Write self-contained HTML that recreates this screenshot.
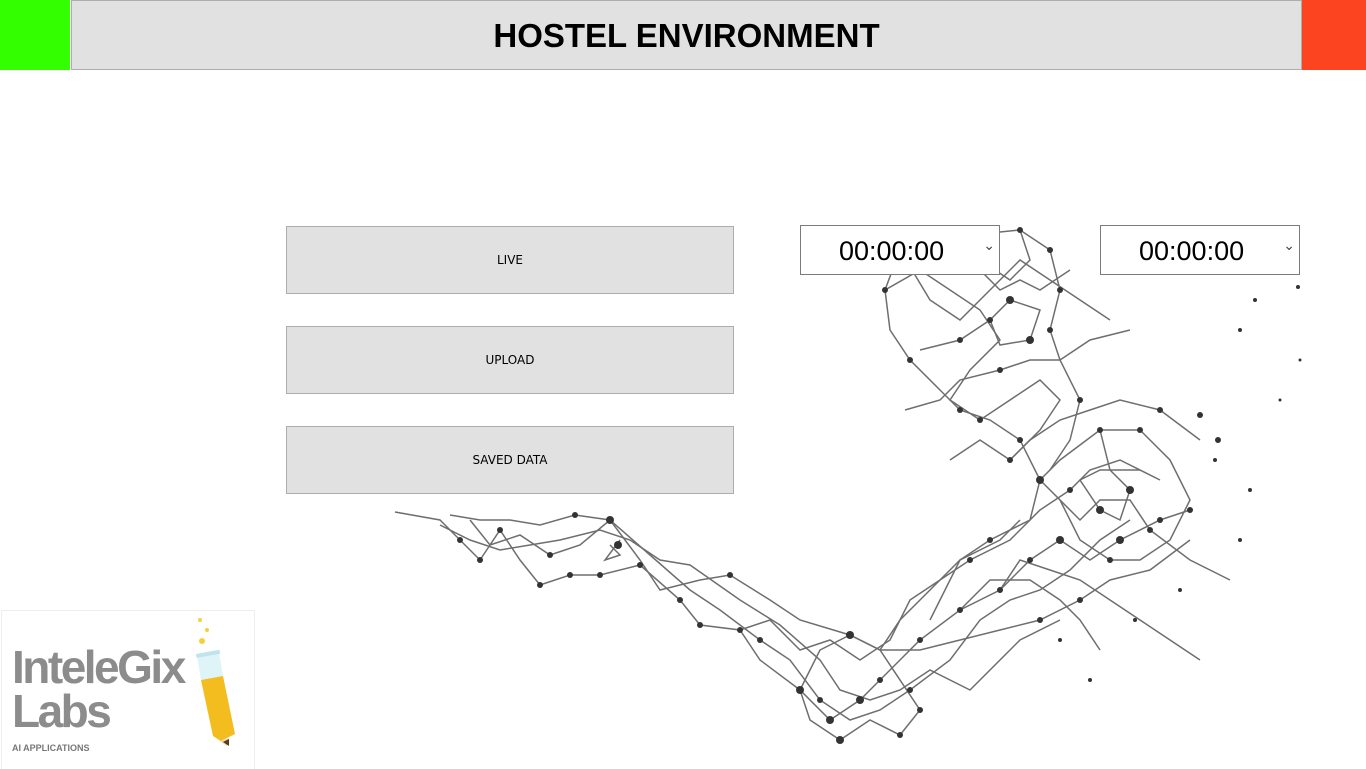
<!DOCTYPE html>
<html><head><meta charset="utf-8"><style>
body{margin:0;width:1366px;height:768px;background:#fff;position:relative;overflow:hidden;font-family:"Liberation Sans",sans-serif}
.g{position:absolute;left:0;top:0;width:70px;height:70px;background:#33ff00}
.r{position:absolute;right:0;top:0;width:64px;height:70px;background:#fc4520}
.hd{position:absolute;left:71px;top:0;width:1229px;height:68px;background:#e1e1e1;border:1px solid #adadad;text-align:center;line-height:70px;font-weight:bold;font-size:33px;color:#000}
.b{position:absolute;left:286px;width:446px;height:66px;background:#e1e1e1;border:1px solid #adadad;text-align:center;line-height:66px;font-size:12px;font-family:"DejaVu Sans",sans-serif;color:#000}
.s{position:absolute;top:225px;width:200px;height:50px;border:1px solid #7a7a7a;background:#fff;font-size:27px;line-height:50px;box-sizing:border-box;padding-left:38px}
.s:after{content:"⌄";position:absolute;right:4px;top:-6px;font-size:14px;color:#444}
.logo{position:absolute;left:1px;top:610px;width:252px;height:158px;border:1px solid #eee;border-bottom:none}
</style></head><body>
<svg style="position:absolute;left:0;top:0" width="1366" height="768">
<g stroke="#555" stroke-width="1.5" fill="none" opacity="0.85">
<polyline points="395,512 440,520 460,540 480,560 500,530 520,560 540,585 570,575 600,575 640,565 680,600 700,625 740,630 760,660 800,690 830,720 860,700 880,680 920,640 960,610 1000,590 1030,560 1060,540 1090,560 1120,540 1160,520 1190,510"/>
<polyline points="450,515 480,520 510,520 540,525 575,515 610,520 640,560 660,590 700,580 730,575 770,600 800,620 850,635 880,650 920,650 960,640 1000,630 1040,620 1080,600 1110,580 1150,570 1190,540"/>
<polyline points="440,525 470,540 500,550 530,545 560,540 600,530 630,540 660,560 690,565 740,600 780,625 820,660 840,690 870,700 900,690 930,670 970,690 1000,660 1020,640 1060,620"/>
<polyline points="800,690 810,720 840,740 870,720 900,735 920,710 880,650 850,635 820,650 800,690"/>
<polyline points="930,620 960,560 990,540 1030,520 1040,480 1060,460 1100,430 1140,430 1170,460 1190,500 1170,540 1140,560 1110,560 1080,540 1060,500 1040,480"/>
<polyline points="1040,480 1020,440 990,420 960,410 940,390 910,360 890,330 885,290 900,250 960,240 1000,232 1020,230 1050,250 1060,290 1050,330 1060,360 1080,400 1070,440 1050,470"/>
<polyline points="905,410 940,400 960,380 1000,370 1030,360 1060,360 1090,340 1130,330"/>
<polyline points="920,350 960,340 990,320 1010,300 1040,310 1030,340 1000,345 990,320"/>
<polyline points="950,460 980,440 1010,460 1030,440 1060,420 1090,410 1120,400 1160,410 1200,440"/>
<polyline points="900,250 930,300 960,320 990,290 1020,260 1050,280 1080,300 1110,320"/>
<polyline points="960,240 980,270 1000,290 1020,280 1040,290 1070,270"/>
<polyline points="1000,590 1020,560 1050,570 1080,580 1110,600 1140,620 1170,640 1200,660"/>
<polyline points="960,610 990,580 1030,580 1060,600 1080,620 1100,650"/>
<polyline points="880,650 900,620 930,590 960,560 1000,540 1020,520"/>
<polyline points="1100,430 1110,470 1130,490 1120,520 1100,510 1080,480 1100,470 1140,470"/>
<polyline points="1060,500 1080,520 1100,500 1130,500 1150,530 1190,560 1230,580"/>
<polyline points="610,545 620,555 605,560 620,540"/>
<polyline points="470,520 490,545 520,535 550,555 580,545 610,520 650,555 690,590 720,610 760,640 790,660 820,700 850,720 880,710 910,690 950,660 980,620 1010,600 1040,590 1070,570 1100,540 1130,520"/>
<polyline points="740,630 770,620 800,650 830,640 860,660 890,640 910,600 940,580 970,560 1010,540 1040,510 1070,490 1090,470 1120,460 1160,480"/>
<polyline points="885,290 920,270 950,290 980,310 1000,340 970,370 950,400 980,420 1010,400 1040,380 1060,400 1040,430 1010,460"/>
<polyline points="1020,230 1030,260 1010,280 980,260 960,240"/>
</g>
<g fill="#333">
<circle cx="460" cy="540" r="3"/><circle cx="480" cy="560" r="3"/><circle cx="500" cy="530" r="3"/><circle cx="540" cy="585" r="3"/><circle cx="570" cy="575" r="3"/><circle cx="600" cy="575" r="3"/><circle cx="640" cy="565" r="3"/><circle cx="680" cy="600" r="3"/><circle cx="700" cy="625" r="3"/><circle cx="740" cy="630" r="3"/><circle cx="800" cy="690" r="4"/><circle cx="830" cy="720" r="4"/><circle cx="860" cy="700" r="4"/><circle cx="880" cy="680" r="3"/><circle cx="920" cy="640" r="3"/><circle cx="960" cy="610" r="3"/><circle cx="1000" cy="590" r="3"/><circle cx="1030" cy="560" r="3"/><circle cx="1060" cy="540" r="4"/><circle cx="1120" cy="540" r="4"/><circle cx="1160" cy="520" r="3"/><circle cx="575" cy="515" r="3"/><circle cx="610" cy="520" r="4"/><circle cx="730" cy="575" r="3"/><circle cx="850" cy="635" r="4"/><circle cx="1040" cy="620" r="3"/><circle cx="1080" cy="600" r="3"/><circle cx="840" cy="740" r="4"/><circle cx="900" cy="735" r="3"/><circle cx="920" cy="710" r="3"/><circle cx="990" cy="540" r="3"/><circle cx="1040" cy="480" r="4"/><circle cx="1100" cy="430" r="3"/><circle cx="1140" cy="430" r="3"/><circle cx="1190" cy="510" r="3"/><circle cx="1110" cy="560" r="3"/><circle cx="1020" cy="440" r="3"/><circle cx="960" cy="410" r="3"/><circle cx="910" cy="360" r="3"/><circle cx="885" cy="290" r="3"/><circle cx="900" cy="250" r="3"/><circle cx="1020" cy="230" r="3"/><circle cx="1050" cy="250" r="3"/><circle cx="1060" cy="290" r="3"/><circle cx="1050" cy="330" r="3"/><circle cx="1080" cy="400" r="3"/><circle cx="1000" cy="370" r="3"/><circle cx="1010" cy="300" r="4"/><circle cx="1030" cy="340" r="4"/><circle cx="990" cy="320" r="3"/><circle cx="960" cy="340" r="3"/><circle cx="1010" cy="460" r="3"/><circle cx="1160" cy="410" r="3"/><circle cx="1130" cy="490" r="4"/><circle cx="1100" cy="510" r="4"/><circle cx="1150" cy="530" r="3"/><circle cx="618" cy="545" r="4"/><circle cx="1200" cy="415" r="3"/><circle cx="1218" cy="440" r="3"/><circle cx="1240" cy="330" r="2"/><circle cx="1255" cy="300" r="2"/><circle cx="1298" cy="287" r="2"/><circle cx="1250" cy="490" r="2"/><circle cx="1215" cy="460" r="2"/><circle cx="1300" cy="360" r="1.5"/><circle cx="1240" cy="540" r="2"/><circle cx="1135" cy="620" r="2"/><circle cx="1090" cy="680" r="2"/><circle cx="1060" cy="640" r="2"/><circle cx="1280" cy="400" r="1.5"/><circle cx="1180" cy="590" r="2"/>
<circle cx="820" cy="700" r="3"/><circle cx="910" cy="690" r="3"/><circle cx="970" cy="560" r="3"/><circle cx="1070" cy="490" r="3"/><circle cx="920" cy="270" r="3"/><circle cx="980" cy="420" r="3"/><circle cx="760" cy="640" r="3"/><circle cx="550" cy="555" r="3"/></g>
</svg>
<div class="g"></div><div class="hd">HOSTEL ENVIRONMENT</div><div class="r"></div>
<div class="b" style="top:226px">LIVE</div>
<div class="b" style="top:326px">UPLOAD</div>
<div class="b" style="top:426px">SAVED DATA</div>
<div class="s" style="left:800px">00:00:00</div>
<div class="s" style="left:1100px">00:00:00</div>
<div class="logo">
<div style="position:absolute;left:10px;top:34px;font-weight:bold;font-size:46px;line-height:44px;color:#8c8c8c;letter-spacing:-2.5px">InteleGix<br>Labs</div>
<div style="position:absolute;left:10px;top:132px;font-weight:bold;font-size:9px;color:#777">AI APPLICATIONS</div>
<svg style="position:absolute;left:185px;top:5px" width="60" height="140">
<circle cx="13" cy="4" r="2" fill="#f5d03c"/><circle cx="20" cy="14" r="2" fill="#f5d03c"/><circle cx="15" cy="25" r="3" fill="#f5d03c"/>
<polygon points="10,40 32,36 36,60 14,64" fill="#dff4f8"/>
<polygon points="14,64 36,60 48,118 34,125 26,120" fill="#f3bd20"/>
<polygon points="26,120 34,125 42,122 40,130" fill="#e8d3b5"/>
<polygon points="36,126 42,123 42,130" fill="#5a3b1a"/>
<rect x="9" y="36" width="24" height="4" fill="#bfe4ec" transform="rotate(-10 20 38)"/>
</svg>
</div>
</body></html>
